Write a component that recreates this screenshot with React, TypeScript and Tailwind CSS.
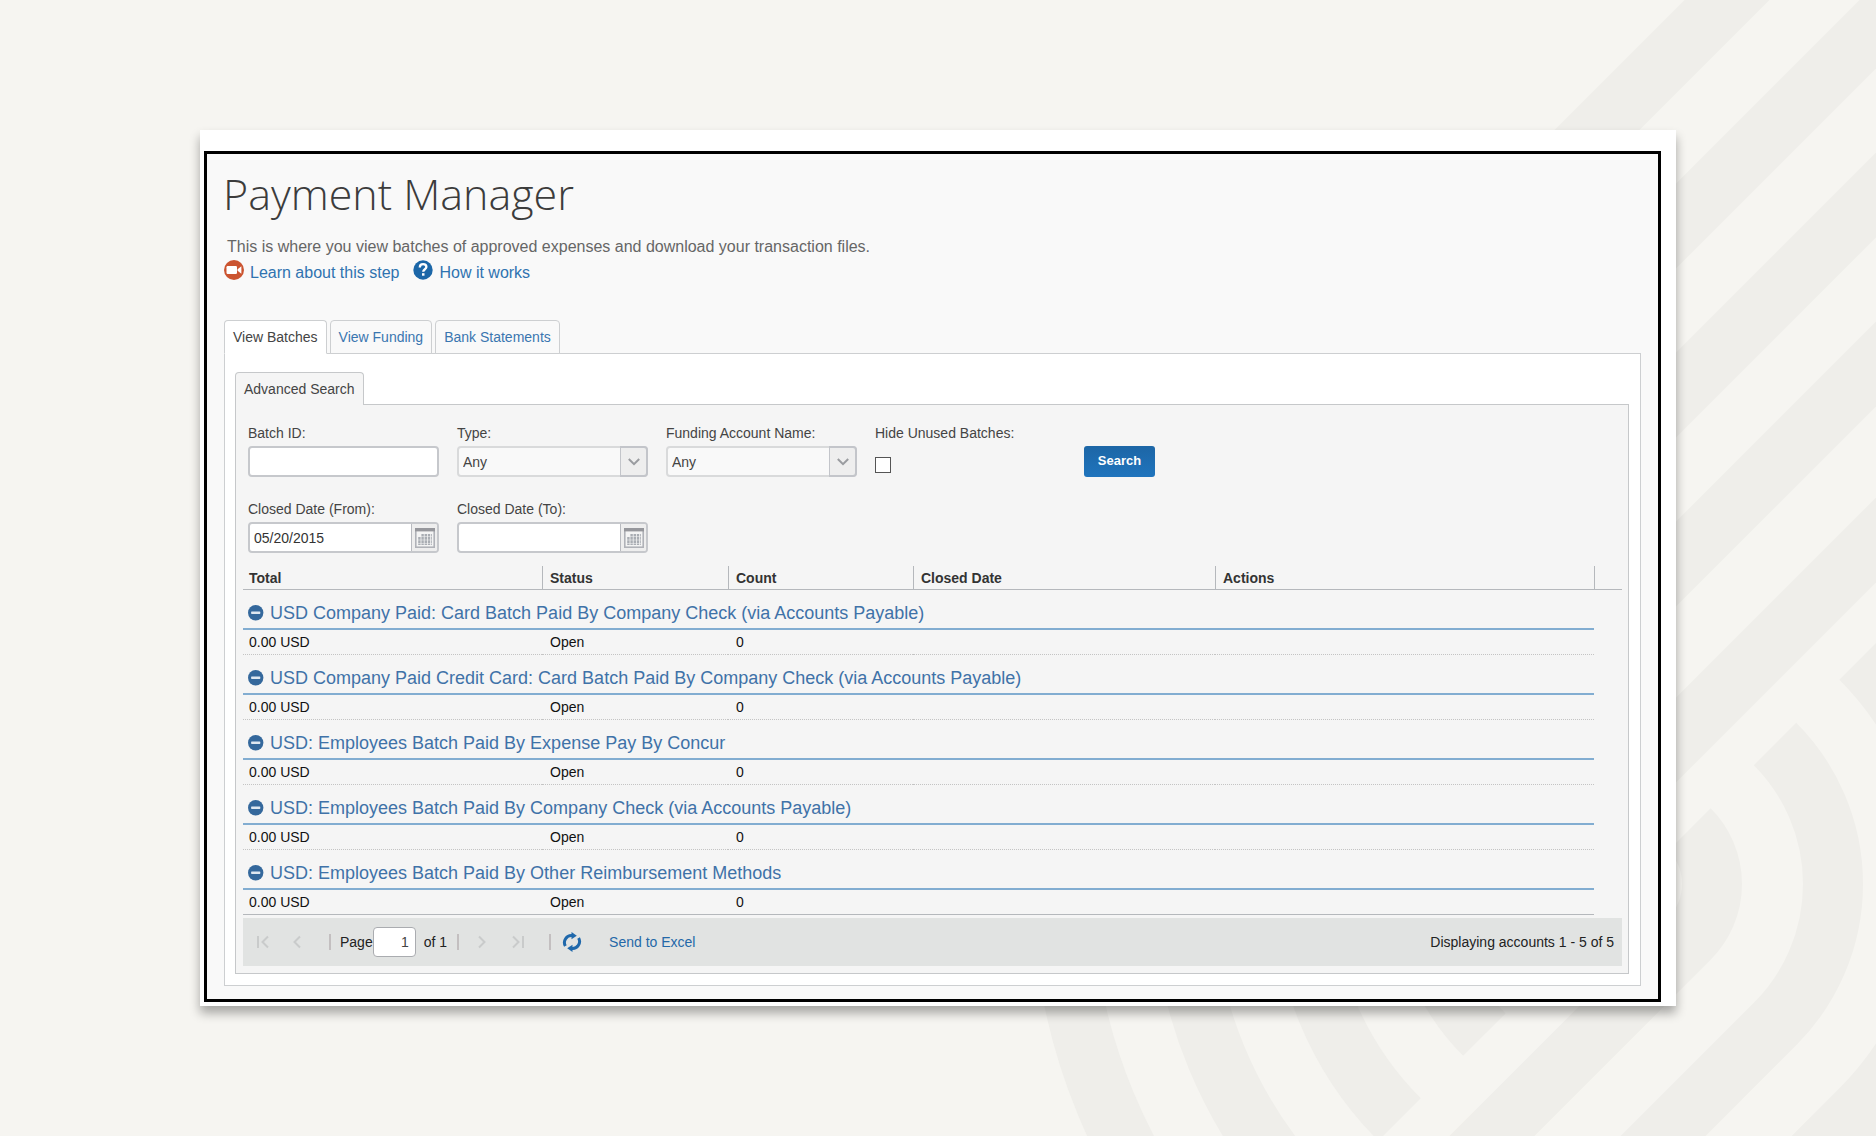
import { useState, type ReactNode } from 'react';

interface Batch {
  name: string;
  total: string;
  status: string;
  count: number;
}

const batches: Batch[] = [
  { name: 'USD Company Paid: Card Batch Paid By Company Check (via Accounts Payable)', total: '0.00 USD', status: 'Open', count: 0 },
  { name: 'USD Company Paid Credit Card: Card Batch Paid By Company Check (via Accounts Payable)', total: '0.00 USD', status: 'Open', count: 0 },
  { name: 'USD: Employees Batch Paid By Expense Pay By Concur', total: '0.00 USD', status: 'Open', count: 0 },
  { name: 'USD: Employees Batch Paid By Company Check (via Accounts Payable)', total: '0.00 USD', status: 'Open', count: 0 },
  { name: 'USD: Employees Batch Paid By Other Reimbursement Methods', total: '0.00 USD', status: 'Open', count: 0 },
];

const tabs = ['View Batches', 'View Funding', 'Bank Statements'];

// Radii of the rings around (1635, 884)
const rightRings = [77, 198, 319];
const leftRings = [213, 333, 453, 573];
const stripes = [1727, 1902, 2071, 2240, 2416];

const Backdrop = () => (
  <svg
    className="absolute inset-0 h-full w-full"
    viewBox="0 0 1876 1136"
    preserveAspectRatio="xMaxYMid slice"
    fill="none"
    stroke="#efeeea"
    strokeWidth="60"
    aria-hidden="true"
  >
    {stripes.map((sum) => (
      <path key={sum} d={`M${sum + 100} -100 L${sum - 900} 900`} />
    ))}
    {rightRings.map((r) => {
      const d = r * Math.SQRT1_2;
      return (
        <path
          key={r}
          d={`M${1635 + d} ${884 - d} A${r} ${r} 0 0 1 ${1635 + d} ${884 + d} l-400 400`}
        />
      );
    })}
    {leftRings.map((r) => {
      const d = r * Math.SQRT1_2;
      return <path key={r} d={`M${1635 - r} 884 A${r} ${r} 0 0 0 ${1635 - d} ${884 + d}`} />;
    })}
  </svg>
);

const VideoIcon = () => (
  <svg className="h-5 w-5 shrink-0" viewBox="0 0 20 20" aria-hidden="true">
    <circle cx="10" cy="10" r="10" fill="#cb5430" />
    <rect x="2.5" y="6" width="10.5" height="8" rx="1.2" fill="#fff" />
    <path d="M13.6 9.2 17.4 6.2v7.6l-3.8-3z" fill="#fff" />
  </svg>
);

const HelpIcon = () => (
  <svg className="h-5 w-5 shrink-0" viewBox="0 0 20 20" aria-hidden="true">
    <circle cx="10" cy="10" r="9.7" fill="#1c67a8" />
    <path d="M6.8 7.4c0-2 1.4-3.2 3.3-3.2s3.3 1.1 3.3 2.8c0 2.2-3.2 2.3-3.2 4.8" fill="none" stroke="#fff" strokeWidth="2.3" />
    <rect x="9" y="13.2" width="2.5" height="2.5" fill="#fff" />
  </svg>
);

const CollapseIcon = () => (
  <svg className="h-4 w-4" viewBox="0 0 16 16" aria-hidden="true">
    <circle cx="7.7" cy="7.7" r="7.7" fill="#34689c" />
    <rect x="3.1" y="6.5" width="9.2" height="2.4" rx="0.6" fill="#dfe8f1" />
  </svg>
);

const CalendarIcon = () => (
  <svg className="h-5 w-5" viewBox="0 0 20 20" aria-hidden="true">
    <rect x="0.8" y="0.8" width="18.4" height="18.4" fill="#f4f4f4" stroke="#b0b2b8" strokeWidth="1.6" />
    <rect x="0" y="0" width="20" height="3.4" fill="#96979c" />
    <path d="M6.4 7.2h10.4" stroke="#a9adb3" strokeWidth="2.6" strokeDasharray="2.4 0.8" />
    <path d="M3.2 10.4h13.6M3.2 13.6h13.6" stroke="#a9adb3" strokeWidth="2.6" strokeDasharray="2.4 0.8" />
    <path d="M3.2 16.2h13.6" stroke="#a9adb3" strokeWidth="1.6" strokeDasharray="2.4 0.8" />
  </svg>
);

const ChevronIcon = () => (
  <svg className="h-3 w-3" viewBox="0 0 12 12" fill="none" stroke="#9a9ca0" strokeWidth="2" aria-hidden="true">
    <path d="M0.8 3 6 8.2 11.2 3" />
  </svg>
);

const RefreshIcon = () => (
  <svg className="h-5 w-5" viewBox="0 0 20 20" aria-hidden="true">
    <g fill="none" stroke="#1f68ab" strokeWidth="3">
      <path d="M3.4 14A7 7 0 0 1 10.5 3.6" />
      <path d="M16.6 6A7 7 0 0 1 9.5 16.4" />
    </g>
    <path d="M9.5 0 14.8 3.8 9.5 7.2z" fill="#1f68ab" />
    <path d="M10.5 20 5.2 16.2 10.5 12.8z" fill="#1f68ab" />
  </svg>
);

const PagerButton = ({ label, path }: { label: string; path: string }) => (
  <button type="button" aria-label={label} disabled className="h-4 w-4">
    <svg className="h-4 w-4" viewBox="0 0 16 16" fill="none" stroke="#c9cbcb" strokeWidth="2" aria-hidden="true">
      <path d={path} />
    </svg>
  </button>
);

const Divider = () => <span className="h-4 w-0.5 bg-[#c3bfc0]" />;

const Field = ({ id, label, children }: { id: string; label: string; children: ReactNode }) => (
  <div className="flex flex-col gap-[3px]">
    <label htmlFor={id} className="whitespace-nowrap leading-5">
      {label}
    </label>
    {children}
  </div>
);

const SelectBox = ({ id }: { id: string }) => (
  <div className="relative h-[31px]">
    <select
      id={id}
      className="h-full w-full appearance-none rounded border-2 border-[#d9dadb] bg-[#f9f9f9] pl-1 text-[#444]"
    >
      <option>Any</option>
    </select>
    <span className="pointer-events-none absolute inset-y-0 right-0 flex w-7 items-center justify-center rounded-r border-2 border-l border-[#c3c5ca] bg-[#eeeeee]">
      <ChevronIcon />
    </span>
  </div>
);

const DateBox = ({ id, value = '' }: { id: string; value?: string }) => (
  <div className="flex h-[31px] overflow-hidden rounded border-2 border-[#c6c8cc] bg-white">
    <input id={id} type="text" defaultValue={value} className="min-w-0 flex-1 pl-1 text-[#333] outline-none" />
    <button
      type="button"
      aria-label="Pick a date"
      className="flex w-[26px] items-center justify-center border-l border-[#b9bbc0] bg-[#eeeeee]"
    >
      <CalendarIcon />
    </button>
  </div>
);

const SearchForm = () => (
  <form
    className="grid grid-cols-[repeat(4,191px)_auto] justify-start gap-x-[18px] gap-y-[22px] px-[5px]"
    onSubmit={(e) => e.preventDefault()}
  >
    <Field id="batch-id" label="Batch ID:">
      <input id="batch-id" type="text" className="h-[31px] rounded border-2 border-[#c6c8cc] bg-white px-1" />
    </Field>
    <Field id="type" label="Type:">
      <SelectBox id="type" />
    </Field>
    <Field id="funding" label="Funding Account Name:">
      <SelectBox id="funding" />
    </Field>
    <Field id="hide-unused" label="Hide Unused Batches:">
      <div className="flex h-[31px] items-end pb-1">
        <input
          id="hide-unused"
          type="checkbox"
          className="h-4 w-4 appearance-none border border-[#555] bg-white checked:bg-[#1c6cb3]"
        />
      </div>
    </Field>
    <div className="flex items-start pt-[23px]">
      <button
        type="submit"
        className="h-[31px] w-[71px] rounded-[3px] bg-linear-to-b from-[#1d66a6] to-[#1f74bd] text-[13px] font-bold text-white"
      >
        Search
      </button>
    </div>
    <Field id="closed-from" label="Closed Date (From):">
      <DateBox id="closed-from" value="05/20/2015" />
    </Field>
    <Field id="closed-to" label="Closed Date (To):">
      <DateBox id="closed-to" />
    </Field>
  </form>
);

const BatchTable = () => (
  <table className="mt-[13px] w-full table-fixed border-separate border-spacing-0 text-left">
    <colgroup>
      <col className="w-[299px]" />
      <col className="w-[186px]" />
      <col className="w-[185px]" />
      <col className="w-[302px]" />
      <col />
      <col className="w-7" />
    </colgroup>
    <thead>
      <tr className="h-6 text-[#333]">
        <th className="border-b border-[#b5b8bc] px-1.5">Total</th>
        {['Status', 'Count', 'Closed Date', 'Actions'].map((name) => (
          <th key={name} className="border-b border-l border-[#b5b8bc] px-[7px]">
            {name}
          </th>
        ))}
        <td className="border-b border-l border-[#b5b8bc]"></td>
      </tr>
    </thead>
    {batches.map((batch, i) => {
      const line = i === batches.length - 1 ? 'border-b border-solid border-[#b5b8bc]' : 'border-b border-dotted border-[#c4c4c4]';
      return (
        <tbody key={batch.name}>
          <tr className="h-10">
            <th colSpan={5} className="border-b-2 border-[#82add1] px-[5px] pt-2 text-lg font-normal leading-5 text-[#3f72a8]">
              <button type="button" className="flex items-center gap-1.5">
                <CollapseIcon />
                {batch.name}
              </button>
            </th>
          </tr>
          <tr className="h-[25px] leading-5 text-[#111]">
            <td className={`px-1.5 ${line}`}>{batch.total}</td>
            <td className={`px-2 ${line}`}>{batch.status}</td>
            <td className={`px-2 ${line}`}>{batch.count}</td>
            <td className={line}></td>
            <td className={line}></td>
          </tr>
        </tbody>
      );
    })}
  </table>
);

const Pager = () => (
  <div className="mt-[3px] flex h-12 items-center bg-[#e1e3e2] pl-3 pr-2 text-[#222]">
    <div className="flex items-center gap-4">
      <PagerButton label="First page" path="M3 2v12M13 2.5 7.5 8l5.5 5.5" />
      <PagerButton label="Previous page" path="M13 2.5 7.5 8l5.5 5.5" />
    </div>
    <div className="ml-[26px] flex items-center">
      <Divider />
      <label htmlFor="page" className="ml-[9px]">
        Page
      </label>
      <input
        id="page"
        type="text"
        defaultValue="1"
        className="h-[30px] w-[43px] rounded border border-[#aaacb0] bg-white pr-1.5 text-right text-[#444]"
      />
      <span className="ml-2 mr-2.5">of 1</span>
      <Divider />
    </div>
    <div className="ml-4 flex items-center gap-5">
      <PagerButton label="Next page" path="M4 2.5 9.5 8 4 13.5" />
      <PagerButton label="Last page" path="M2 2.5 7.5 8 2 13.5M12 2v12" />
    </div>
    <div className="ml-[22px] flex items-center">
      <Divider />
      <button type="button" aria-label="Refresh" className="ml-[11px]">
        <RefreshIcon />
      </button>
      <a href="#excel" className="ml-[27px] text-[#2468a8]">
        Send to Excel
      </a>
    </div>
    <span className="ml-auto">Displaying accounts 1 - 5 of 5</span>
  </div>
);

export default function App() {
  const [activeTab, setActiveTab] = useState(tabs[0]);

  return (
    <div className="relative min-h-screen overflow-hidden bg-[#f6f5f1] px-[200px] py-[130px] font-['Liberation_Sans',Arial,sans-serif] text-sm text-[#444]">
      <Backdrop />
      <div className="relative bg-white pb-1 pl-1 pr-[15px] pt-[21px] shadow-[0_7px_10px_rgba(0,0,0,0.33)]">
        <main className="border-3 border-black bg-[#f9f9f9] px-[17px] pb-[13px] pt-2.5">
          <h1 className="-ml-px font-['Open_Sans',sans-serif] text-[43px] font-light leading-[60px] text-[#3c3c3c]">
            Payment Manager
          </h1>
          <p className="mt-2.5 pl-[3px] text-base leading-[26px] text-[#666]">
            This is where you view batches of approved expenses and download your transaction files.
          </p>
          <div className="flex gap-3.5 text-base leading-[26px] text-[#2f73b0]">
            <a href="#learn" className="flex gap-1.5">
              <VideoIcon />
              Learn about this step
            </a>
            <a href="#how" className="flex gap-1.5">
              <HelpIcon />
              How it works
            </a>
          </div>

          <div className="relative -mb-px mt-[34px] flex gap-[3px]" role="tablist">
            {tabs.map((tab) => (
              <button
                key={tab}
                type="button"
                role="tab"
                aria-selected={tab === activeTab}
                onClick={() => setActiveTab(tab)}
                className={`h-[34px] rounded-t border border-[#cdcfd1] px-2 ${
                  tab === activeTab ? 'border-b-white bg-white text-[#444]' : 'bg-[#f9f9f9] text-[#3a76b0]'
                }`}
              >
                {tab}
              </button>
            ))}
          </div>

          <section className="border border-[#cdcfd1] bg-white pb-[11px] pl-2.5 pr-[11px] pt-[18px]">
            <h2 className="relative -mb-px flex h-[33px] w-fit items-center rounded-t border border-b-0 border-[#c6c8ca] bg-[#f5f5f5] px-2">
              Advanced Search
            </h2>
            <div className="border border-[#c6c8ca] bg-[#f5f5f5] pb-[7px] pl-[7px] pr-1.5 pt-[18px]">
              <SearchForm />
              <BatchTable />
              <Pager />
            </div>
          </section>
        </main>
      </div>
    </div>
  );
}
